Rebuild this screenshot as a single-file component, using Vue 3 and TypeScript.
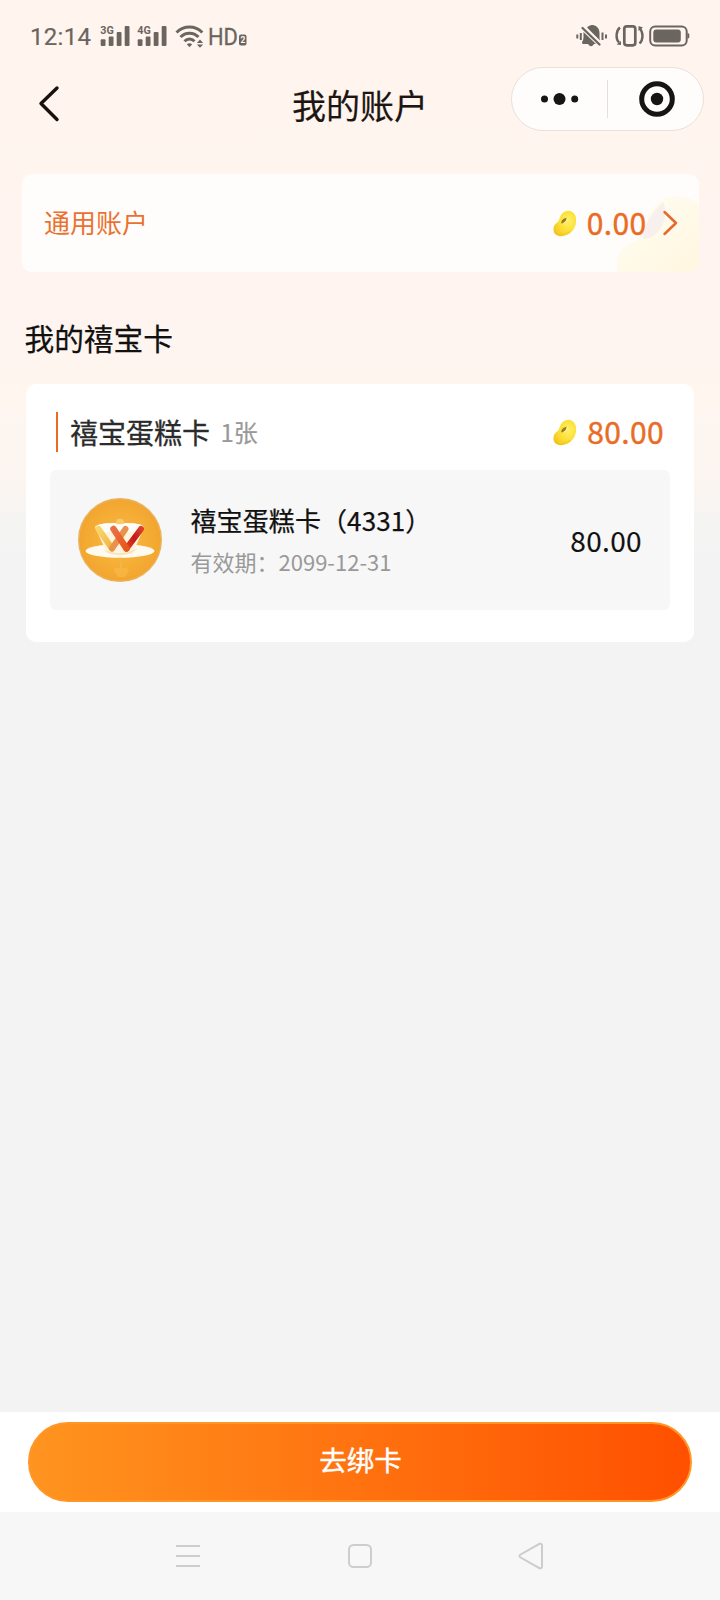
<script setup lang="ts">
interface BoundCard {
  name: string
  no: string
  expires: string
  amount: string
}

const generalBalance = '0.00'
const groupBalance = '80.00'
const cards: BoundCard[] = [
  { name: '禧宝蛋糕卡', no: '4331', expires: '2099-12-31', amount: '80.00' },
]
const networks: string[] = ['3G', '4G']
</script>

<template>
  <div class="screen">
    <svg class="defs" width="0" height="0">
      <defs>
        <radialGradient id="beanFill" cx="0.65" cy="0.4" r="0.75">
          <stop offset="0" stop-color="#fff06a" />
          <stop offset="0.5" stop-color="#fbe136" />
          <stop offset="1" stop-color="#f3c41e" />
        </radialGradient>
        <symbol id="bean" viewBox="0 0 24 27">
          <path d="M9.500 3.200C13-.5 20-.5 22.500 6C24.500 13 21.500 20 16 23.800C10 27.600 3 26.800 1 22.500C-.3 18.500 .8 15 3.800 12.800C6.800 10.800 6 6.800 9.500 3.200Z" fill="url(#beanFill)" />
          <path d="M2 23C6 26 12 25.500 17 21.500" stroke="#efbd20" stroke-width="1.200" fill="none" opacity=".5" />
          <path d="M8.300 13.500C8 10.500 10 8.500 13.800 7.800C13.500 10.500 11.500 13.500 8.300 13.500Z" fill="#9c7a20" />
          <path d="M10.500 13C12.800 12.300 14 10.500 14.200 8" stroke="#fff6b0" stroke-width="1" fill="none" />
        </symbol>
      </defs>
    </svg>

    <div class="status">
      <span class="clock">12:14</span>
      <svg v-for="n in networks" :key="n" class="signal" width="30" height="28" viewBox="0 -6 30 28">
        <text x=".3" y="9" textLength="13.500" lengthAdjust="spacingAndGlyphs">{{ n }}</text>
        <rect x=".7" y="14.300" width="4.800" height="6.700" rx="1" />
        <rect x="8.700" y="11.500" width="4.800" height="9.500" rx="1" />
        <rect x="16.700" y="7" width="4.800" height="14" rx="1" />
        <rect x="24.700" y="1" width="4.800" height="20" rx="1" />
      </svg>
      <svg class="wifi" width="30" height="23" viewBox="0 0 30 23">
        <g fill="none" stroke="#6b6560" stroke-width="3">
          <path d="M1.500 7.500C9 .2 20 .2 27.300 7.500" />
          <path d="M5.500 12C10.500 6.900 18.500 6.900 23.500 12" />
          <path d="M9.500 16.200C12.500 13.100 16.500 13.100 19.500 16.200" />
        </g>
        <path d="M11.800 19.200Q14.500 17.400 17.200 19.200L14.500 22.300Z M21.800 18L25 14.600L28.200 18Z M21.800 19.500L25 22.700L28.200 19.500Z" fill="#6b6560" />
      </svg>
      <svg class="hd" width="40" height="34" viewBox="0 -6 40 34">
        <text class="hd-text" x="0" y="20" font-size="24" textLength="30" lengthAdjust="spacingAndGlyphs">HD</text>
        <rect x="31" y="9.500" width="7.500" height="11" rx="2" />
        <text class="sim" x="32.500" y="18.300" font-size="8.500">2</text>
      </svg>
      <svg class="bell" width="32" height="24" viewBox="0 0 32 24" fill="#6b6560">
        <path d="M11 3.500C13 1.300 15 1 17 1C21.500 2 23.500 5 23.500 9V14.500L24 16.500Z" />
        <path d="M7.500 8L20 20H18Q15 24.500 12 20H6.500L6 18Q7.800 16 7.500 12Z" />
        <path d="M6.500 4L23.500 20.500" stroke="#6b6560" stroke-width="2.300" stroke-linecap="round" />
        <path d="M1.300 10.500V14.500M4.800 9V16M26.500 8.500V16M30 10.500V14.500" stroke="#6b6560" stroke-width="2" />
      </svg>
      <svg class="vibrate" width="29" height="24" viewBox="0 0 29 24" fill="none" stroke="#6b6560">
        <rect x="9.300" y="2.300" width="11" height="19" rx="2.500" stroke-width="2.700" />
        <path d="M5 3.500C.6 7 .6 15 4 18.500M24.500 4C28.500 8.500 28.500 15.500 24.500 19.500" stroke-width="2.400" />
        <path d="M1.500 20.500L6 17V21Z M23.500 2L28 3.500L23.500 7Z" fill="#6b6560" stroke="none" />
      </svg>
      <svg class="battery" width="41" height="22" viewBox="0 0 41 22" fill="#6b6560">
        <rect x="1.200" y="1.500" width="36.500" height="19" rx="5" fill="none" stroke="#6b6560" stroke-width="2" />
        <rect x="4.300" y="4.500" width="27.500" height="13" rx="3" />
        <path d="M38.500 8Q40.300 8 40.300 9.500V12Q40.300 13.500 38.500 13.500Z" />
      </svg>
    </div>

    <header class="navbar">
      <svg class="back" width="24" height="38" viewBox="0 0 24 38">
        <path d="M19 3L3 18.500L19 34.500" fill="none" stroke="#171210" stroke-width="3.400" stroke-linecap="round" stroke-linejoin="round" />
      </svg>
      <h1>我的账户</h1>
      <div class="capsule">
        <svg width="95" height="62" viewBox="0 0 95 62" fill="#151515">
          <circle cx="32.500" cy="31" r="3.500" /><circle cx="47.500" cy="31" r="6" /><circle cx="62.700" cy="31" r="3.500" />
        </svg>
        <i class="divider"></i>
        <svg width="95" height="62" viewBox="0 0 95 62">
          <circle cx="49" cy="31" r="15.300" fill="none" stroke="#151515" stroke-width="5" />
          <circle cx="49" cy="31" r="6.200" fill="#151515" />
        </svg>
      </div>
    </header>

    <section class="general">
      <svg class="watermark" width="83" height="82" viewBox="0 0 83 82">
        <defs>
          <linearGradient id="wm" x1="0" y1="0" x2="1" y2="1">
            <stop offset="0" stop-color="#fffdf6" /><stop offset=".5" stop-color="#fffae9" /><stop offset="1" stop-color="#fff6df" />
          </linearGradient>
        </defs>
        <path d="M1 82C-1 66 4 57 16 53C30 47 27 30 37 18C46 4 67 2 83 14V82Z" fill="url(#wm)" />
        <path d="M27 49C28 34 36 22 47 12C54 26 44 49 27 49Z" fill="#f8f0ed" />
      </svg>
      <span class="label">通用账户</span>
      <svg class="bean"><use href="#bean" /></svg>
      <span class="money">{{ generalBalance }}</span>
      <svg class="arrow" width="16" height="28" viewBox="0 0 16 28">
        <path d="M2.500 3L14 14L2.500 25" fill="none" stroke="#e9692c" stroke-width="2.500" stroke-linecap="round" stroke-linejoin="round" />
      </svg>
    </section>

    <h2>我的禧宝卡</h2>

    <section class="group">
      <div class="group-head">
        <i class="bar"></i>
        <span class="group-name">禧宝蛋糕卡</span>
        <span class="count">{{ cards.length }}张</span>
        <svg class="bean"><use href="#bean" /></svg>
        <span class="money">{{ groupBalance }}</span>
      </div>
      <div v-for="c in cards" :key="c.no" class="item">
        <svg class="logo" width="84" height="84" viewBox="0 0 84 84">
          <defs>
            <radialGradient id="disc"><stop offset="0" stop-color="#fabd45" /><stop offset="1" stop-color="#f2a52e" /></radialGradient>
            <linearGradient id="gold" x1="0" y1="0" x2="1" y2="1"><stop offset="0" stop-color="#f9d46a" /><stop offset="1" stop-color="#efb543" /></linearGradient>
            <linearGradient id="orange" x1="0" y1="0" x2="1" y2="1"><stop offset="0" stop-color="#e87044" /><stop offset="1" stop-color="#e9561a" /></linearGradient>
            <linearGradient id="red" x1="0" y1="1" x2="1" y2="0"><stop offset="0" stop-color="#e0451a" /><stop offset=".55" stop-color="#c4181e" /><stop offset="1" stop-color="#db4028" /></linearGradient>
          </defs>
          <circle cx="42" cy="42" r="41.300" fill="url(#disc)" stroke="#e9b35e" stroke-width="1.400" />
          <circle cx="42" cy="24.500" r="3.800" fill="#f7cb70" />
          <ellipse cx="42" cy="53" rx="34.500" ry="6.700" fill="#fffaf0" />
          <path d="M17 29Q20 25 37 25Q42 28 47 25Q63 25 66 29L56 53Q42 58 28 53Z" fill="#fff3dc" />
          <path d="M20 27Q26 25 37 25Q42 28 47 25Q58 25 64 27L58 34H26Z" fill="#fffdf8" />
          <path d="M25 51Q42 60 60 50L54 55Q42 59 30 55Z" fill="#f8e3b5" />
          <g fill="none" stroke-width="6" stroke-linecap="round">
            <path d="M20.500 31L34 50.500" stroke="url(#gold)" />
            <path d="M34 50.500L47.500 31" stroke="#e9924d" />
            <path d="M48.500 50.500L63 31" stroke="url(#red)" />
            <path d="M35.500 31L48.500 50.500" stroke="url(#orange)" stroke-width="6.500" />
          </g>
          <path d="M37 70H48Q51 70 51 73L47 79H40L36 73Z M42 64H44V70H42Z" fill="#f8bb49" opacity=".6" />
        </svg>
        <div class="info">
          <div class="item-name">{{ c.name }}（{{ c.no }}）</div>
          <div class="expiry">有效期：{{ c.expires }}</div>
        </div>
        <span class="item-amount">{{ c.amount }}</span>
      </div>
    </section>

    <footer class="action"><button class="bind">去绑卡</button></footer>

    <nav class="sysnav">
      <svg width="28" height="28" viewBox="0 0 28 28"><path d="M2 4H26M2 14H26M2 24H26" /></svg>
      <svg width="28" height="28" viewBox="0 0 28 28"><rect x="3" y="3" width="22" height="22" rx="4.500" /></svg>
      <svg width="28" height="28" viewBox="0 0 28 28"><path d="M3.200 12.700Q1.800 14 3.200 15.300L22.500 26.200Q24.700 26.700 25 24.800V3.200Q24.700 1.300 22.500 1.800Z" /></svg>
    </nav>
  </div>
</template>

<style>
body {
  margin: 0;
}
</style>

<style scoped>
.screen {
  width: 720px;
  height: 1600px;
  display: flex;
  flex-direction: column;
  overflow: hidden;
  font-family: "Noto Sans CJK SC", sans-serif;
  color: #111;
  background: linear-gradient(#fff5ee 0, #fff4ef 300px, #fff6f0 400px, #fbf5f1 490px, #f4f4f3 525px, #f3f3f3 560px);
}
.defs {
  position: absolute;
}
.status {
  height: 67px;
  box-sizing: border-box;
  padding: 0 30px;
  display: flex;
  align-items: flex-start;
  font-family: Roboto, sans-serif;
  fill: #6b6560;
}
.clock {
  width: 70px;
  margin-top: 22px;
  font-size: 24px;
  line-height: 30px;
  letter-spacing: 0.3px;
  color: #6b6560;
  -webkit-text-stroke: 0.2px #6b6560;
}
.signal {
  margin: 19px 7.3px 0 0;
}
.signal text {
  font-size: 11.5px;
  font-weight: 700;
}
.wifi {
  margin-top: 25px;
}
.hd {
  margin: 19px 0 0 3px;
}
.hd-text {
  stroke: #6b6560;
  stroke-width: 0.3px;
}
.sim {
  fill: #fff4ed;
  font-weight: 700;
}
.bell {
  margin: 24px 0 0 auto;
}
.vibrate {
  margin: 24px 0 0 7px;
}
.battery {
  margin: 24.5px 0 0 5.5px;
}
.navbar {
  height: 64px;
  display: grid;
  grid-template-columns: 1fr auto 1fr;
  align-items: center;
  padding: 0 16px;
}
.back {
  margin: 9px 0 0 22px;
}
h1 {
  margin: 11px 0 0;
  font-size: 34px;
  line-height: 48px;
  font-weight: 400;
  color: #1d1512;
  -webkit-text-stroke: 0.2px #1d1512;
}
.capsule {
  justify-self: end;
  display: flex;
  align-items: center;
  box-sizing: border-box;
  width: 193px;
  height: 64px;
  border: 1px solid #ebe0da;
  border-radius: 32px;
  background: #fffdfb;
}
.divider {
  width: 1px;
  height: 38px;
  background: #e6dfdb;
}
.general {
  position: relative;
  display: flex;
  align-items: center;
  box-sizing: border-box;
  height: 98px;
  margin: 43px 21px 0 22px;
  padding: 0 21px 0 22px;
  border-radius: 10px;
  background: #fffdfc;
  overflow: hidden;
}
.watermark {
  position: absolute;
  right: 0;
  bottom: 0;
}
.general > :not(.watermark) {
  position: relative;
}
.label {
  margin-bottom: 2px;
  font-size: 26px;
  line-height: 36px;
  color: #ea7230;
}
.bean {
  width: 24px;
  height: 27px;
  margin: 0 10px 0 auto;
}
.money {
  margin-bottom: 2px;
  font-size: 30px;
  line-height: 40px;
  font-weight: 400;
  letter-spacing: 0.35px;
  color: #ea6c24;
  -webkit-text-stroke: 0.4px #ea6c24;
}
.arrow {
  margin-left: 15.5px;
}
h2 {
  margin: 46px 0 0 24.5px;
  font-size: 29.7px;
  line-height: 40px;
  font-weight: 400;
  -webkit-text-stroke: 0.25px #111;
}
.group {
  box-sizing: border-box;
  height: 258px;
  margin: 26px 26px 0;
  padding: 28px 24px 0 24px;
  border-radius: 10px;
  background: #fff;
}
.group-head {
  display: flex;
  align-items: center;
  height: 40px;
  padding: 0 6px 0 6px;
}
.bar {
  width: 2px;
  height: 40px;
  background: #ec6a22;
}
.group-name {
  margin: 0 0 1px 12px;
  font-size: 28px;
  line-height: 40px;
  font-weight: 400;
  color: #2b2b2b;
  -webkit-text-stroke: 0.3px #2b2b2b;
}
.count {
  margin-left: 10.5px;
  font-size: 24px;
  line-height: 40px;
  color: #999;
  -webkit-text-stroke: 0.2px #999;
}
.item {
  display: flex;
  align-items: center;
  box-sizing: border-box;
  height: 140px;
  margin-top: 18px;
  padding: 0 28px;
  border-radius: 6px;
  background: #f7f7f7;
}
.info {
  margin: 1px 0 0 28.5px;
}
.item-name {
  font-size: 26px;
  line-height: 42px;
  font-weight: 400;
  letter-spacing: 0.1px;
  -webkit-text-stroke: 0.25px #111;
}
.expiry {
  font-size: 22px;
  line-height: 41px;
  color: #999;
}
.item-amount {
  margin: 0 0 1px auto;
  font-size: 28px;
  line-height: 40px;
  letter-spacing: 0.35px;
  -webkit-text-stroke: 0.15px #111;
}
.action {
  box-sizing: border-box;
  height: 100px;
  margin-top: auto;
  padding: 10px 28px;
  background: #fff;
}
.bind {
  display: block;
  box-sizing: border-box;
  width: 100%;
  height: 80px;
  padding: 0 0 6px 1px;
  border: 2px solid #ff9627;
  border-radius: 40px;
  background: linear-gradient(90deg, #ff941f, #ff5000);
  font: 400 27.5px/40px "Noto Sans CJK SC", sans-serif;
  color: #fff;
  -webkit-text-stroke: 0.4px #fff;
}
.sysnav {
  display: flex;
  align-items: center;
  justify-content: space-between;
  height: 88px;
  box-sizing: border-box;
  padding: 0 175px 0 174px;
  background: #f7f7f7;
}
.sysnav svg {
  fill: none;
  stroke: #cdcdcd;
  stroke-width: 2;
}
</style>
